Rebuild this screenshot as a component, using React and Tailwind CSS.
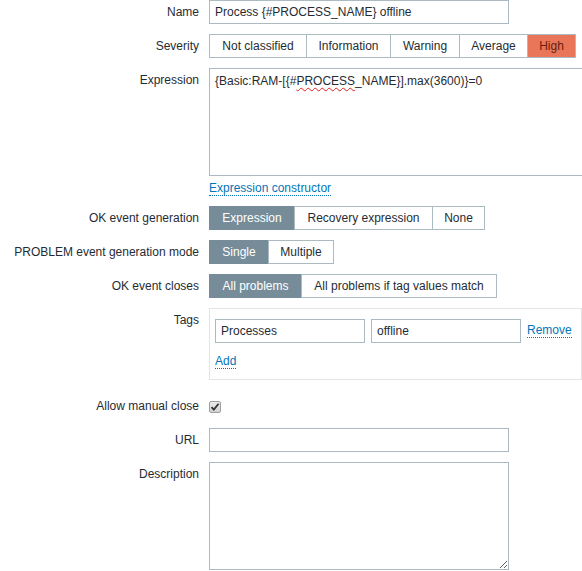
import { useState } from 'react';

/* ── Form row: right-aligned label + field ───────────────────── */
function Row({ label, children, className = '' }) {
  return (
    <div className={`grid grid-cols-[199px_1fr] gap-x-[10px] items-start ${className}`}>
      <div className="text-right leading-[24px] whitespace-nowrap">{label}</div>
      <div className="min-w-0">{children}</div>
    </div>
  );
}

/* ── Segmented button group ─────────────────────────────────── */
function Segmented({ items, value, onChange }) {
  return (
    <div className="flex h-[24px]">
      {items.map((it, i) => {
        const active = it.label === value;
        const last = i === items.length - 1;
        let cls = 'border-[#acbbc2] bg-white text-[#1f2c33]';
        if (active && it.high) cls = 'border-[#acbbc2] bg-[#e97659] text-[#6b1d0c]';
        else if (active) cls = 'border-[#768d99] bg-[#768d99] text-white';
        return (
          <button
            key={it.label}
            onClick={() => onChange(it.label)}
            className={`flex items-center justify-center border-y border-l ${last ? 'border-r' : ''} ${cls}`}
            style={{ width: it.w }}
          >
            {it.label}
          </button>
        );
      })}
    </div>
  );
}

function TextInput({ value, className = 'w-[300px]' }) {
  return (
    <div className={`h-[24px] border border-[#acbbc2] bg-white px-[5px] leading-[22px] whitespace-nowrap overflow-hidden ${className}`}>
      {value}
    </div>
  );
}

function LinkText({ children }) {
  return (
    <span className="text-[#0275b8] border-b border-dotted border-[#0275b8] leading-[13px] inline-block">
      {children}
    </span>
  );
}

export default function App() {
  const [severity, setSeverity] = useState('High');
  const [okGen, setOkGen]       = useState('Expression');
  const [mode, setMode]         = useState('Single');
  const [closes, setCloses]     = useState('All problems');
  const [manual, setManual]     = useState(true);

  return (
    <div
      className="w-[582px] h-[571px] overflow-hidden bg-white text-[12px] text-[#1f2c33] flex flex-col"
      style={{ fontFamily: '"Liberation Sans", Arial, sans-serif' }}
    >
      <Row label="Name">
        <TextInput value="Process {#PROCESS_NAME} offline" />
      </Row>

      <Row label="Severity" className="mt-[10px]">
        <Segmented
          value={severity}
          onChange={setSeverity}
          items={[
            { label: 'Not classified', w: 97 },
            { label: 'Information', w: 84 },
            { label: 'Warning', w: 69 },
            { label: 'Average', w: 68 },
            { label: 'High', w: 49, high: true },
          ]}
        />
      </Row>

      <Row label="Expression" className="mt-[10px]">
        <div className="w-[400px] h-[108px] border border-[#acbbc2] bg-white px-[5px] pt-[4px] leading-[16px] whitespace-nowrap">
          {'{Basic:RAM-[{#'}
          <span className="underline decoration-wavy decoration-[#e02020] decoration-1 underline-offset-2">PROCESS</span>
          {'_NAME}].max(3600)}=0'}
        </div>
        <div className="mt-[3px] h-[20px]">
          <LinkText>Expression constructor</LinkText>
        </div>
      </Row>

      <Row label="OK event generation" className="mt-[7px]">
        <Segmented
          value={okGen}
          onChange={setOkGen}
          items={[
            { label: 'Expression', w: 85 },
            { label: 'Recovery expression', w: 138 },
            { label: 'None', w: 53 },
          ]}
        />
      </Row>

      <Row label="PROBLEM event generation mode" className="mt-[10px]">
        <Segmented
          value={mode}
          onChange={setMode}
          items={[
            { label: 'Single', w: 59 },
            { label: 'Multiple', w: 66 },
          ]}
        />
      </Row>

      <Row label="OK event closes" className="mt-[10px]">
        <Segmented
          value={closes}
          onChange={setCloses}
          items={[
            { label: 'All problems', w: 92 },
            { label: 'All problems if tag values match', w: 196 },
          ]}
        />
      </Row>

      <Row label="Tags" className="mt-[10px]">
        <div className="w-[373px] h-[72px] border border-[#e4e4e4] pt-[10px] px-[5px]">
          <div className="flex items-center gap-[6px]">
            <TextInput value="Processes" className="w-[150px]" />
            <TextInput value="offline" className="w-[150px]" />
            <LinkText>Remove</LinkText>
          </div>
          <div className="mt-[9px]">
            <LinkText>Add</LinkText>
          </div>
        </div>
      </Row>

      <Row label="Allow manual close" className="mt-[14px]">
        <div className="h-[24px] flex items-center">
          <button
            onClick={() => setManual(!manual)}
            className="w-[12px] h-[12px] mt-[1px] border border-[#a0a0a0] rounded-[2px] bg-gradient-to-b from-[#ececec] to-[#d2d2d2] flex items-center justify-center"
          >
            {manual && (
              <svg width="10" height="10" viewBox="0 0 10 10">
                <path d="M1.5 5.2 L3.8 7.6 L8.6 1.8" fill="none" stroke="#333" strokeWidth="1.8" />
              </svg>
            )}
          </button>
        </div>
      </Row>

      <Row label="URL" className="mt-[10px]">
        <TextInput value="" />
      </Row>

      <Row label="Description" className="mt-[10px]">
        <textarea
          className="block w-[300px] h-[108px] border border-[#acbbc2] bg-white resize outline-none"
          defaultValue=""
        />
      </Row>
    </div>
  );
}
